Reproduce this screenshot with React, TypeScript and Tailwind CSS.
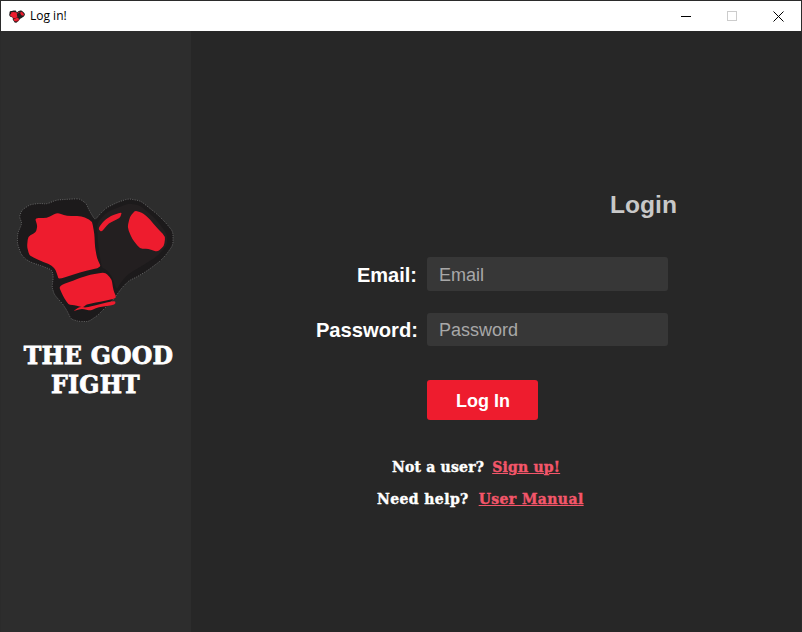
import React from 'react';

const SANS = 'font-["Liberation_Sans",Arial,sans-serif]';

type Pt = [number, number];

const lerp = (a: Pt, b: Pt, t: number) => `${a[0] + (b[0] - a[0]) * t} ${a[1] + (b[1] - a[1]) * t}`;

// Contorno con las esquinas apenas redondeadas
const smooth = (pts: Pt[]) => {
  const n = pts.length;
  let d = '';
  pts.forEach((p, i) => {
    const prev = pts[(i - 1 + n) % n];
    const next = pts[(i + 1) % n];
    d += `${i === 0 ? 'M' : ' L'}${lerp(p, prev, 0.3)} Q${p[0]} ${p[1]} ${lerp(p, next, 0.3)}`;
  });
  return d + ' Z';
};

const HALO: Pt[] = [
  [66, 60], [90, 44], [118, 40], [140, 42], [170, 30], [200, 28], [238, 26], [258, 40], [268, 62], [285, 90], [300, 72],
  [320, 53], [350, 38], [385, 26], [422, 33], [447, 53], [472, 73], [497, 98], [519, 125], [519, 165], [500, 192],
  [482, 212], [442, 242], [412, 260], [387, 272], [367, 292], [352, 312], [337, 332], [322, 347], [292, 377], [265, 395],
  [235, 394], [213, 387], [201, 362], [188, 342], [163, 314], [156, 290], [160, 262], [156, 240], [123, 227], [93, 217],
  [76, 207], [63, 192], [52, 160], [53, 130], [66, 100], [58, 80],
];

const RIGHT_GLOVE: Pt[] = [
  [290, 100], [320, 66], [385, 40], [420, 46], [465, 85], [500, 130], [502, 165], [470, 200], [430, 225], [385, 252],
  [362, 278], [350, 300], [335, 258], [320, 240], [305, 232], [295, 170],
];

const FIST: Pt[] = [
  [105, 84], [140, 84], [172, 68], [200, 78], [245, 78], [276, 93], [283, 130], [285, 170], [291, 205], [304, 232],
  [240, 247], [176, 268], [172, 255], [165, 236], [150, 224], [130, 216], [108, 206], [88, 196], [81, 170], [84, 140],
  [108, 126], [112, 108],
];

const CUFF: Pt[] = [
  [176, 288], [240, 264], [270, 254], [316, 247], [335, 268], [340, 300], [350, 325], [300, 335], [258, 344], [250, 352],
  [222, 345], [205, 344], [188, 316],
];

const STRIP: Pt[] = [[218, 364], [240, 350], [258, 353], [346, 331], [346, 344], [295, 352], [270, 362], [245, 356]];

const THUMB: Pt[] = [
  [405, 62], [425, 68], [442, 80], [470, 112], [496, 140], [492, 168], [472, 186], [445, 176], [420, 176], [396, 146],
  [382, 112], [390, 80],
];

const HIGHLIGHT: Pt[] = [[294, 116], [312, 92], [332, 78], [366, 66], [360, 84], [326, 100], [304, 126]];

// Corazón de dos guantes de boxeo, calcado del logo
const GloveLogo = ({ className, halo = true }: { className: string; halo?: boolean }) => (
  <svg viewBox="45 21 480 375" className={className}>
    <path
      d={smooth(HALO)}
      fill="#1c1a1b"
      stroke={halo ? '#8a8a8a' : 'none'}
      strokeWidth="2"
      strokeDasharray="3 4"
    />
    <path d={smooth(RIGHT_GLOVE)} fill="#231f20" />
    <path d={smooth(FIST)} fill="#ee1c2e" />
    <path d={smooth(CUFF)} fill="#ee1c2e" />
    <path d={smooth(STRIP)} fill="#ee1c2e" />
    <path d={smooth(THUMB)} fill="#ee1c2e" />
    <path d={smooth(HIGHLIGHT)} fill="#ee1c2e" />
  </svg>
);

const WindowControls = () => (
  <div className="flex h-full items-center">
    <div className="flex h-full w-[46px] items-center justify-center">
      <div className="h-px w-[10px] bg-black" />
    </div>
    <div className="flex h-full w-[46px] items-center justify-center">
      <div className="size-[10px] border border-[#cccccc]" />
    </div>
    <div className="flex h-full w-[46px] items-center justify-center">
      <svg viewBox="0 0 11 11" className="size-[11px]" stroke="#000" strokeWidth="1" fill="none">
        <path d="M0.5 0.5 L10.5 10.5 M10.5 0.5 L0.5 10.5" />
      </svg>
    </div>
  </div>
);

export default function App() {
  return (
    <div className={`flex h-[632px] w-[802px] flex-col overflow-hidden border-x border-t border-[#2b2b2b] bg-[#272727] ${SANS}`}>
      {/* Barra de título */}
      <div className="flex h-[30px] shrink-0 items-center justify-between bg-white">
        <div className="flex items-center gap-[5px] pl-[8px]">
          <GloveLogo className="h-[13px] w-[16px]" halo={false} />
          <span className='font-["Open_Sans",sans-serif] text-[12px] text-black'>Log in!</span>
        </div>
        <WindowControls />
      </div>

      <div className="flex min-h-0 flex-1">
        {/* Lateral con logo */}
        <aside className="flex w-[190px] shrink-0 flex-col items-center bg-[#2d2d2d] pt-[166px]">
          <GloveLogo className="ml-[-2px] h-[125px] w-[160px]" />
          <h1 className='mt-[20px] pl-[5px] text-center font-["DejaVu_Serif",serif] text-[23.6px] leading-[29px] font-bold tracking-[0.2px] text-white [-webkit-text-stroke:0.8px_white]'>
            THE GOOD
            <span className="block pr-[6px]">FIGHT</span>
          </h1>
        </aside>

        {/* Formulario */}
        <main className="flex flex-1 flex-col pt-[159px]">
          <h2 className="pl-[419px] text-[24.6px] leading-[30px] font-bold text-[#c8c8c8]">Login</h2>
          <div className="mt-[37px] flex items-center gap-[9px]">
            <label className="w-[227px] pt-[2px] pr-[1px] text-right text-[20px] font-bold text-white">Email:</label>
            <input
              type="email"
              placeholder="Email"
              className="h-[34px] w-[241px] rounded-[3px] bg-[#373737] px-3 pt-[2px] text-[18px] text-white outline-none placeholder:text-[#a8a8a8]"
            />
          </div>
          <div className="mt-[22px] flex items-center gap-[9px]">
            <label className="w-[227px] pt-[2px] text-right text-[20.2px] font-bold text-white">Password:</label>
            <input
              type="password"
              placeholder="Password"
              className="h-[33px] w-[241px] rounded-[3px] bg-[#373737] px-3 pt-[2px] text-[18px] text-white outline-none placeholder:text-[#a8a8a8]"
            />
          </div>
          <button className="mt-[34px] ml-[236px] h-[40px] w-[111px] rounded-[3px] bg-[#ee1c2e] pt-[2px] pl-px text-[18px] font-bold text-white">
            Log In
          </button>
          <div className='mt-[37px] flex flex-col gap-[11px] font-["DejaVu_Serif",serif] text-[14px] leading-[21px] font-bold text-white [-webkit-text-stroke:0.4px]'>
            <p className="ml-[201px] flex gap-[8px] tracking-[0.2px]">
              <span>Not a user?</span>
              <a className="text-[#f4566a] underline">Sign up!</a>
            </p>
            <p className="ml-[186px] flex gap-[10px] tracking-[0.4px]">
              <span>Need help?</span>
              <a className="text-[#f4566a] underline">User Manual</a>
            </p>
          </div>
        </main>
      </div>
    </div>
  );
}
